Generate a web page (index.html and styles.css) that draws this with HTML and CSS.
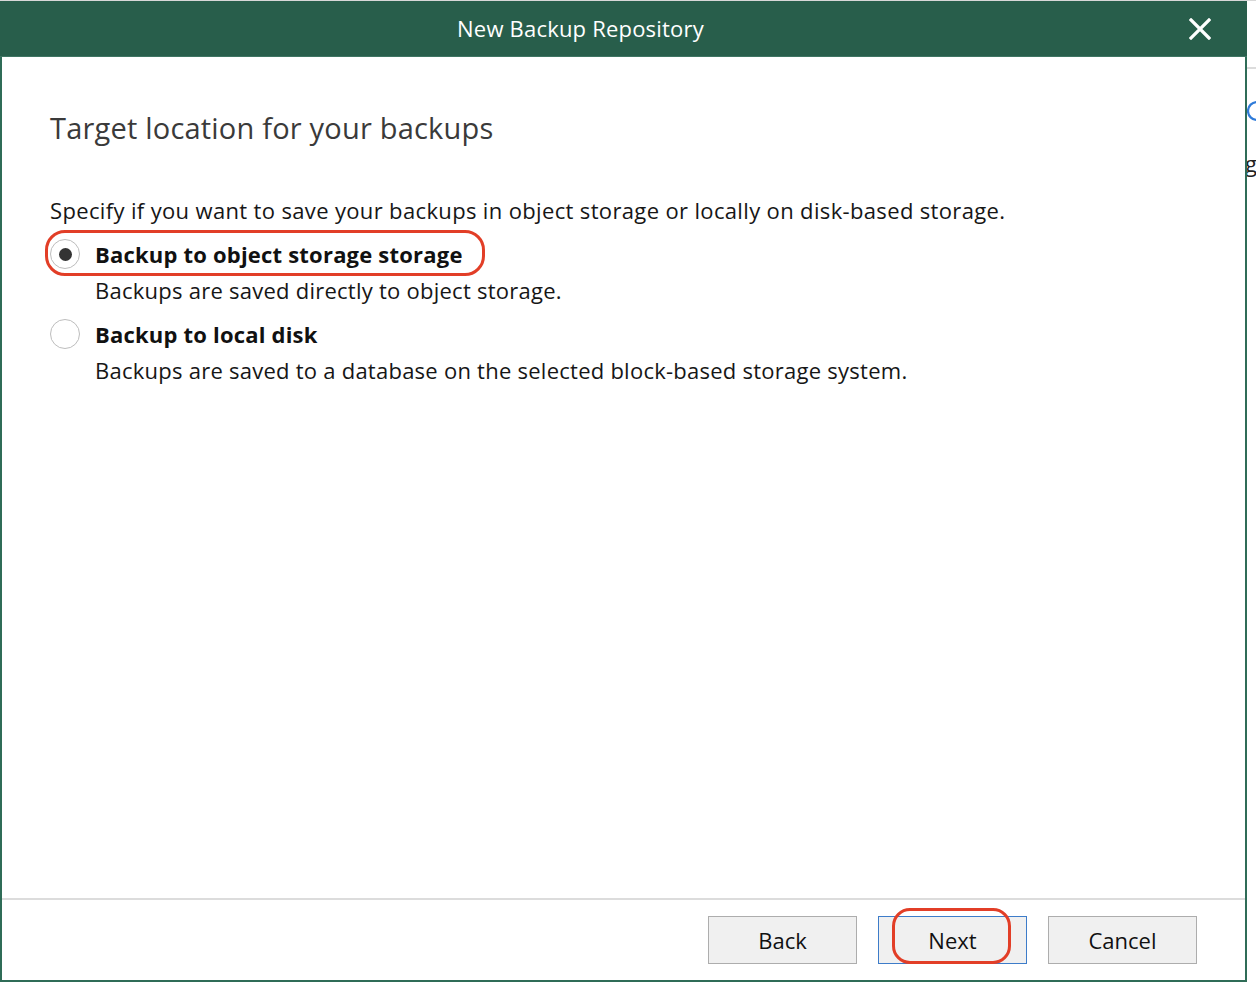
FILE: index.html
```html
<!DOCTYPE html>
<html>
<head>
<meta charset="utf-8">
<title>New Backup Repository</title>
<link rel="stylesheet" href="styles.css">
</head>
<body>
<div class="backdrop">
  <div class="bg-toolbar"></div>
  <svg class="bg-c" width="12" height="24" viewBox="0 0 12 24"><path d="M10 3 A8.5 8.5 0 0 0 10 21" fill="none" stroke="#2f7bd9" stroke-width="2.2"/></svg>
  <div class="bg-item bg-g">g</div>
</div>
<div class="dialog">
  <div class="titlebar">
    <span class="title">New Backup Repository</span>
    <svg class="close" width="22" height="22" viewBox="0 0 22 22"><path d="M2 2 L20 20 M20 2 L2 20" stroke="#fff" stroke-width="3.2" stroke-linecap="square"/></svg>
  </div>
  <div class="content">
    <h1 class="heading">Target location for your backups</h1>
    <p class="intro">Specify if you want to save your backups in object storage or locally on disk-based storage.</p>
    <div class="option">
      <div class="opt-row">
        <span class="radio checked"><span class="dot"></span></span>
        <span class="label">Backup to object storage storage</span>
        <span class="mark mark-opt"></span>
      </div>
      <div class="desc">Backups are saved directly to object storage.</div>
    </div>
    <div class="option">
      <div class="opt-row">
        <span class="radio"></span>
        <span class="label">Backup to local disk</span>
      </div>
      <div class="desc">Backups are saved to a database on the selected block-based storage system.</div>
    </div>
  </div>
  <div class="footer">
    <button class="btn">Back</button>
    <button class="btn btn-default">Next<span class="mark mark-next"></span></button>
    <button class="btn">Cancel</button>
  </div>
</div>
</body>
</html>
```

FILE: styles.css
```css
html, body {
  margin: 0;
  padding: 0;
  background: #ffffff;
  font-family: "Open Sans", "Noto Sans", "Liberation Sans", sans-serif;
}
body {
  width: 1256px;
  height: 986px;
  position: relative;
  overflow: hidden;
}
.backdrop {
  position: absolute;
  inset: 0;
  background: #fff;
  border-top: 1px solid #d8d8d8;
}
.bg-toolbar {
  position: absolute;
  left: 1246px;
  top: 66px;
  width: 20px;
  height: 2px;
  background: #dcdcdc;
}
.bg-c {
  position: absolute;
  left: 1247px;
  top: 98px;
}
.bg-item {
  position: absolute;
  left: 1245px;
  font-size: 22px;
  line-height: 24px;
}
.bg-g { top: 150px; color: #222; }

.dialog {
  position: absolute;
  left: 0;
  top: 1px;
  width: 1243px;
  height: 979px;
  background: #fff;
  border: 2px solid #2f6c57;
  border-top: none;
  display: flex;
  flex-direction: column;
}
.titlebar {
  height: 55px;
  margin: 0 -2px;
  background: #285e4b;
  border-bottom: 1px solid #3f7563;
  display: flex;
  align-items: center;
  justify-content: center;
  position: relative;
  flex: none;
}
.title {
  color: #fff;
  font-size: 22px;
  letter-spacing: 0.2px;
  margin-right: 86px;
  margin-top: -1px;
}
.close {
  position: absolute;
  right: 36px;
  top: 17px;
}
.content {
  flex: 1;
  padding: 0 0 0 48px;
  position: relative;
}
.heading {
  margin: 51px 0 0 0;
  font-weight: 400;
  font-size: 29px;
  line-height: 40px;
  color: #3a3a3a;
  letter-spacing: 0.2px;
}
.intro {
  margin: 47px 0 0 0;
  font-size: 22px;
  line-height: 30px;
  color: #161616;
  letter-spacing: 0.35px;
}
.option {
  position: relative;
}
.opt-row {
  display: flex;
  align-items: center;
  height: 40px;
  margin-top: 9px;
  position: relative;
}
.option + .option .opt-row { margin-top: 8px; }
.radio {
  width: 30px;
  height: 30px;
  border: 1.5px solid #bdbdbd;
  border-radius: 50%;
  box-sizing: border-box;
  display: flex;
  align-items: center;
  justify-content: center;
  margin-left: 0;
  margin-right: 15px;
  background: #fff;
}
.dot {
  width: 13px;
  height: 13px;
  border-radius: 50%;
  background: #333;
}
.label {
  font-weight: 700;
  font-size: 22px;
  color: #111;
  letter-spacing: 0.2px;
}
.desc {
  padding-left: 45px;
  font-size: 22px;
  line-height: 32px;
  color: #161616;
  letter-spacing: 0.25px;
}
.mark {
  position: absolute;
  border: 3px solid #e23e27;
  border-radius: 20px;
  pointer-events: none;
  box-sizing: border-box;
}
.mark-opt {
  left: -5px;
  top: -4px;
  width: 440px;
  height: 46px;
}
.footer {
  flex: none;
  height: 82px;
  border-top: 2px solid #dcdcdc;
  display: flex;
  justify-content: flex-end;
  align-items: flex-start;
  gap: 21px;
  padding: 16px 48px 0 0;
  box-sizing: border-box;
}
.btn {
  width: 149px;
  height: 48px;
  background: #f0f0f0;
  border: 1.5px solid #adadad;
  font-family: "Open Sans", "Noto Sans", "Liberation Sans", sans-serif;
  font-size: 22px;
  color: #111;
  letter-spacing: 0;
  padding: 0;
  position: relative;
}
.btn-default {
  border-color: #3d7cc9;
}
.mark-next {
  left: 13px;
  top: -9px;
  width: 119px;
  height: 56px;
  border-radius: 18px;
}
```
